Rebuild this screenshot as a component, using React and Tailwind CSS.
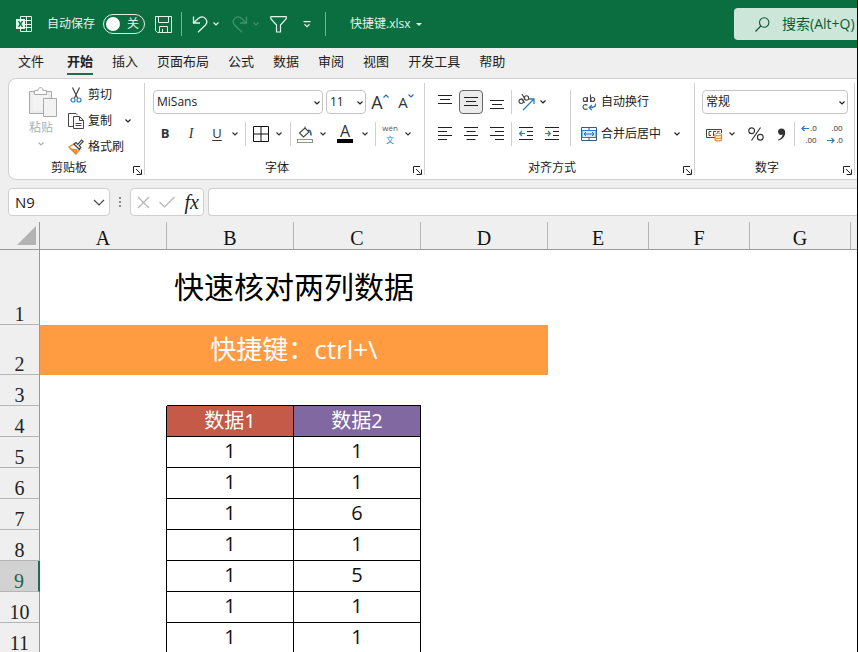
import React, { useState } from 'react';

const tabs = ['文件', '开始', '插入', '页面布局', '公式', '数据', '审阅', '视图', '开发工具', '帮助'];

const columns = ['A', 'B', 'C', 'D', 'E', 'F', 'G'];

const rows = [
    { id: 5, left: 1, right: 1 },
    { id: 6, left: 1, right: 1 },
    { id: 7, left: 1, right: 6 },
    { id: 8, left: 1, right: 1 },
    { id: 9, left: 1, right: 5 },
    { id: 10, left: 1, right: 1 },
    { id: 11, left: 1, right: 1 }
];

const Chevron = ({ className = '' }) => (
    <svg viewBox="0 0 6 4" className={`w-1.5 h-1 shrink-0 ${className}`} fill="none" stroke="currentColor" strokeWidth="1.2">
        <path d="M0.5 0.5 3 3 5.5 0.5" />
    </svg>
);

const IconButton = ({ label, className = '', children }) => (
    <button type="button" aria-label={label} className={`h-6 shrink-0 flex items-center justify-center ${className}`}>
        {children}
    </button>
);

const Divider = ({ className = '' }) => <div className={`w-px h-6 shrink-0 bg-[#d0d0d0] ${className}`} />;

const Select = ({ label, value, className = '' }) => (
    <div className={`relative h-6 ${className}`}>
        <select aria-label={label} className="appearance-none w-full h-full pl-[3px] pr-4 bg-white border border-[#c4c4c4] rounded text-xs text-[#222]">
            <option>{value}</option>
        </select>
        <Chevron className="absolute right-[3px] top-[11px] pointer-events-none" />
    </div>
);

const Group = ({ title, className = '', children }) => (
    <section aria-label={title} className={`flex shrink-0 py-1 ${className}`}>
        <div className="flex-1 flex flex-col">
            <div className="flex-1">{children}</div>
            <div className="flex items-center h-3.5 pr-[2px]">
                <span className="flex-1 text-center pr-1">{title}</span>
                <button type="button" aria-label={`${title}设置`} className="self-end">
                    <svg viewBox="0 0 9 9" className="w-[9px] h-[9px]" fill="none" stroke="#222" strokeWidth="1">
                        <path d="M0.5 7V0.5H7M3 3l4.5 4.5M8.5 3.5v5h-5" />
                    </svg>
                </button>
            </div>
        </div>
        <div className="w-px bg-[#d2d2d2]" />
    </section>
);

const Lines = ({ d }) => (
    <svg viewBox="0 0 14 14" className="w-3.5 h-3.5" fill="none" stroke="#222" strokeWidth="1">
        <path d={d} />
    </svg>
);

const TitleBar = () => {
    const [autoSave, setAutoSave] = useState(false);

    return (
        <header className="flex items-center h-12 shrink-0 pl-4 bg-[#0b6e40] text-[#e2f5ea] text-xs">
            <svg viewBox="0 0 17 17" className="w-[17px] h-[17px] shrink-0" fill="none" stroke="currentColor">
                <path d="M4.5 3.5v-3h11v15h-11v-3M10.5 0.5v15M8 4.5h7.5M9 8.5h6.5M8 11.5h7.5" />
                <rect x="0" y="3" width="9" height="10" fill="currentColor" stroke="none" />
                <path d="M2.5 5.2l4 5.6M6.5 5.2l-4 5.6" stroke="#0b6e40" strokeWidth="1.4" />
            </svg>
            <label htmlFor="autosave" className="ml-3.5 shrink-0">自动保存</label>
            <span className="relative ml-2 w-[42px] h-5 shrink-0">
                <input
                    id="autosave"
                    type="checkbox"
                    role="switch"
                    checked={autoSave}
                    onChange={(e) => setAutoSave(e.target.checked)}
                    className="appearance-none block w-full h-full border border-[#d9f2e4] rounded-full"
                />
                <span className="absolute left-[3px] top-[3px] w-3.5 h-3.5 bg-white rounded-full pointer-events-none" />
                <span className="absolute right-1.5 top-0.5 leading-4 pointer-events-none">{autoSave ? '开' : '关'}</span>
            </span>
            <IconButton label="保存" className="ml-[9px] w-[18px]">
                <svg viewBox="0 0 17 17" className="w-[17px] h-[17px]" fill="none" stroke="currentColor">
                    <path d="M0.5 0.5h16v16h-14l-2-2zM3.5 0.5v6h10v-6M4.5 16.5v-6h8v6M7.5 13v3.5" />
                </svg>
            </IconButton>
            <div className="w-px h-6 shrink-0 ml-[9px] bg-[#6fb792]" />
            <IconButton label="撤消" className="ml-2.5 w-4">
                <svg viewBox="0 0 16 17" className="w-4 h-[17px]" fill="none" stroke="currentColor" strokeWidth="1.3">
                    <path d="M1.5 0.5v6.5h6.5M1.5 7L6 2.7C8.5 0.4 11.5 0.5 13.3 2.4c1.9 2 1.8 4.8-.1 6.8L6 16.3" />
                </svg>
            </IconButton>
            <IconButton label="撤消列表" className="w-4"><Chevron /></IconButton>
            <IconButton label="恢复" className="ml-2 w-4 text-[#3f9468]">
                <svg viewBox="0 0 16 17" className="w-4 h-[17px]" fill="none" stroke="currentColor" strokeWidth="1.3">
                    <path d="M14.5 0.5v6.5H8M14.5 7L10 2.7C7.5 0.4 4.5 0.5 2.7 2.4c-1.9 2-1.8 4.8.1 6.8L10 16.3" />
                </svg>
            </IconButton>
            <IconButton label="恢复列表" className="w-4 text-[#3f9468]"><Chevron /></IconButton>
            <IconButton label="筛选" className="ml-1.5 w-[17px]">
                <svg viewBox="0 0 17 17" className="w-[17px] h-[17px]" fill="none" stroke="currentColor" strokeWidth="1.2">
                    <path d="M0.8 0.7h15.4v2L10.5 9v7h-4V9L0.8 2.7z" />
                </svg>
            </IconButton>
            <IconButton label="自定义快速访问工具栏" className="ml-3 w-4">
                <svg viewBox="0 0 8 7" className="w-2 h-[7px]" fill="none" stroke="currentColor" strokeWidth="1.2">
                    <path d="M0.5 0.6h7M1.5 3.2L4 5.6l2.5-2.4" />
                </svg>
            </IconButton>
            <div className="w-px h-6 shrink-0 ml-2.5 bg-[#6fb792]" />
            <button type="button" className="ml-6 flex shrink-0 items-center gap-1.5">
                快捷键.xlsx
                <svg viewBox="0 0 6 3" className="w-1.5 h-[3px]" fill="currentColor"><path d="M0 0h6L3 3z" /></svg>
            </button>
            <div className="ml-auto w-[123px] h-8 shrink-0 flex items-center pl-[21px] bg-[#cde6da] text-[#0b5a35] rounded-l">
                <svg viewBox="0 0 15 15" className="w-[15px] h-[15px] shrink-0" fill="none" stroke="currentColor" strokeWidth="1.1">
                    <circle cx="9.2" cy="5.5" r="4.7" />
                    <path d="M5.8 9L0.5 14.5" />
                </svg>
                <input
                    type="text"
                    aria-label="搜索"
                    placeholder="搜索(Alt+Q)"
                    className="ml-3 min-w-0 flex-1 bg-transparent text-sm placeholder:text-[#0b5a35] outline-none"
                />
            </div>
        </header>
    );
};

const Clipboard = () => (
    <Group title="剪贴板" className="w-[136px]">
        <div className="flex pl-5">
            <button type="button" disabled className="flex flex-col items-center w-7 text-[#b0b0b0]">
                <svg viewBox="0 0 28 31" className="w-7 h-[31px] mt-1" fill="#ececec" stroke="#a9a9a9">
                    <path d="M0.5 4.5h22v22h-22z" />
                    <path d="M3.5 7.5h16v16h-16z" fill="#f3f3f3" stroke="none" />
                    <path d="M5.5 7.5v-4h3.500c0-4 5-4 5 0h3.500v4z" fill="#fff" />
                    <path d="M14.5 11.5h13v18h-13z" fill="#f3f3f3" />
                </svg>
                <span className="mt-0.5 mr-1 leading-4">粘贴</span>
                <Chevron className="mt-1.5 mr-1" />
            </button>
            <div className="flex flex-col ml-[11px]">
                <button type="button" className="flex items-center gap-1 h-[22px] mt-px">
                    <svg viewBox="0 0 16 16" className="w-4 h-4" fill="none" stroke="#444" strokeWidth="1.2">
                        <path d="M4.500 0.500l5 10.500M11.500 0.500L6.500 11" />
                        <circle cx="5" cy="13" r="2" stroke="#2f7fc4" />
                        <circle cx="11" cy="13" r="2" stroke="#2f7fc4" />
                    </svg>
                    剪切
                </button>
                <div className="flex items-center h-[30px]">
                    <button type="button" className="flex items-center gap-1">
                        <svg viewBox="0 0 16 16" className="w-4 h-4" fill="none" stroke="#444">
                            <path d="M5 13.5H0.5v-13H8l1.500 1.500" />
                            <path d="M5.5 3.5h6l4 4v8h-10zM11.5 3.5v4h4M7.5 10.5h6M7.5 12.5h6" fill="#fff" />
                        </svg>
                        复制
                    </button>
                    <IconButton label="复制选项" className="ml-2 w-4"><Chevron /></IconButton>
                </div>
                <button type="button" className="flex items-center gap-1 h-[22px]">
                    <svg viewBox="0 0 16 16" className="w-4 h-4" fill="none" stroke="#444" strokeWidth="1.2">
                        <path d="M1 8l5-3 5.500 5.500L8 15z" fill="#fff" stroke="#e0832a" />
                        <path d="M3 10l6 1-1.500 3.500z" fill="#f0a040" stroke="#e0832a" />
                        <path d="M6 5l2-1.500 1.800 1.800L13.5 1l1.700 1.500-4 4.200 1.600 1.600L11.5 10.5z" fill="#fff" />
                    </svg>
                    格式刷
                </button>
            </div>
        </div>
    </Group>
);

const FontGroup = () => (
    <Group title="字体" className="w-[280px]">
        <div className="flex flex-col gap-2 pl-2 pt-[7px]">
            <div className="flex items-center">
                <Select label="字体" value="MiSans" className="w-[170px]" />
                <Select label="字号" value="11" className="ml-[3px] w-10" />
                <IconButton label="增大字号" className="ml-0.5 w-6 text-[#333]">
                    <span className="text-lg leading-6">A</span>
                    <svg viewBox="0 0 6 4" className="w-1.5 h-1 mb-3" fill="none" stroke="#2b6cb0" strokeWidth="1.2"><path d="M0.5 3.5L3 1l2.500 2.500" /></svg>
                </IconButton>
                <IconButton label="减小字号" className="ml-0.5 w-6 text-[#333]">
                    <span className="text-[15px] leading-6">A</span>
                    <svg viewBox="0 0 6 4" className="w-1.5 h-1 mb-3" fill="none" stroke="#2b6cb0" strokeWidth="1.2"><path d="M0.5 0.5L3 3l2.500-2.500" /></svg>
                </IconButton>
            </div>
            <div className="flex items-center text-[13px] text-[#333]">
                <IconButton label="加粗" className="w-6 font-bold">B</IconButton>
                <IconButton label="倾斜" className="w-7 italic font-['Liberation_Serif',serif] text-sm">I</IconButton>
                <IconButton label="下划线" className="w-6 underline underline-offset-2">U</IconButton>
                <IconButton label="下划线选项" className="w-3"><Chevron /></IconButton>
                <Divider className="mx-1" />
                <IconButton label="边框" className="w-[22px]">
                    <svg viewBox="0 0 16 16" className="w-4 h-4" fill="none" stroke="#111" strokeWidth="1">
                        <path d="M0.5 0.5h15v15h-15zM8 0.5v15M0.5 8h15" />
                    </svg>
                </IconButton>
                <IconButton label="边框选项" className="w-3.5"><Chevron /></IconButton>
                <Divider className="mx-1" />
                <IconButton label="填充颜色" className="w-5">
                    <svg viewBox="0 0 16 17" className="w-4 h-[17px]" fill="none" stroke="#444" strokeWidth="1.1">
                        <path d="M2.5 7L8 2l4 4-5.500 5z M8 2V0.5" />
                        <path d="M11 4.500c2.500-.5 3 1.500 3 5" stroke="#2b5f9e" strokeWidth="1.6" />
                        <path d="M0.5 13.5h15v3h-15z" stroke="#8a9a8a" fill="#fff" />
                    </svg>
                </IconButton>
                <IconButton label="填充颜色选项" className="w-4"><Chevron /></IconButton>
                <IconButton label="字体颜色" className="w-7 flex-col">
                    <span className="text-base leading-[13px]">A</span>
                    <span className="w-4 h-1 mt-px bg-black" />
                </IconButton>
                <IconButton label="字体颜色选项" className="w-3"><Chevron /></IconButton>
                <Divider className="mx-1" />
                <IconButton label="拼音指南" className="w-5 flex-col text-[8px]">
                    <span className="leading-3 text-[#555]">wén</span>
                    <span className="leading-3 text-[#2f86c9]">文</span>
                </IconButton>
                <IconButton label="拼音选项" className="w-4"><Chevron /></IconButton>
            </div>
        </div>
    </Group>
);

const AlignGroup = () => (
    <Group title="对齐方式" className="w-[270px]">
        <div className="flex pl-[7px] pt-[7px]">
            <div className="flex flex-col gap-2">
                <div className="flex items-center">
                    <IconButton label="顶端对齐" className="w-[26px]"><Lines d="M0 0.5h14M2 4.5h10M0 8.5h14" /></IconButton>
                    <IconButton label="垂直居中" className="w-6 mx-px bg-[#ebebeb] border border-[#666] rounded"><Lines d="M0 2.5h14M2 6.5h10M0 10.5h14" /></IconButton>
                    <IconButton label="底端对齐" className="w-[26px]"><Lines d="M0 5.5h14M2 9.5h10M0 13.5h14" /></IconButton>
                    <Divider className="mx-px" />
                    <IconButton label="方向" className="w-[26px]">
                        <svg viewBox="0 0 17 17" className="w-[17px] h-[17px]" fill="none" stroke="#444" strokeWidth="1.1">
                            <circle cx="3.2" cy="7.3" r="2.2" />
                            <path d="M3.5 4.5L6.800 9" />
                            <circle cx="8.500" cy="4" r="2.2" />
                            <path d="M4 0L7.500 6" />
                            <path d="M5 16L15.5 5.5M11 5h5v5" stroke="#2b7cc4" strokeWidth="1.3" />
                        </svg>
                    </IconButton>
                    <IconButton label="方向选项" className="w-2"><Chevron /></IconButton>
                </div>
                <div className="flex items-center">
                    <IconButton label="左对齐" className="w-[26px]"><Lines d="M0 0.5h14M0 4.5h9M0 8.5h14M0 12.5h9" /></IconButton>
                    <IconButton label="居中" className="w-[26px]"><Lines d="M0 0.5h14M2.5 4.5h9M0 8.5h14M2.5 12.5h9" /></IconButton>
                    <IconButton label="右对齐" className="w-[26px]"><Lines d="M0 0.5h14M5 4.5h9M0 8.5h14M5 12.5h9" /></IconButton>
                    <Divider className="mx-px" />
                    <IconButton label="减少缩进量" className="w-[26px]">
                        <svg viewBox="0 0 14 14" className="w-3.5 h-3.5" fill="none" stroke="#222">
                            <path d="M0 0.5h14M8 4.5h6M8 8.5h6M0 12.5h14" />
                            <path d="M0.8 6.5H6M3 4L0.7 6.5 3 9" stroke="#2b7cc4" strokeWidth="1.2" />
                        </svg>
                    </IconButton>
                    <IconButton label="增加缩进量" className="w-[26px]">
                        <svg viewBox="0 0 14 14" className="w-3.5 h-3.5" fill="none" stroke="#222">
                            <path d="M0 0.5h14M8 4.5h6M8 8.5h6M0 12.5h14" />
                            <path d="M0 6.5h5.200M3 4l2.300 2.500L3 9" stroke="#2b7cc4" strokeWidth="1.2" />
                        </svg>
                    </IconButton>
                </div>
            </div>
            <div className="ml-[5px] w-px bg-[#d2d2d2]" />
            <div className="flex flex-col gap-2 ml-2.5">
                <button type="button" className="flex items-center gap-1 h-6">
                    <svg viewBox="0 0 16 17" className="w-4 h-[17px]" fill="none" stroke="#444" strokeWidth="1.1">
                        <circle cx="4.2" cy="5.500" r="2" />
                        <path d="M6.4 3v5M9.5 0.500v7.500" />
                        <circle cx="11.7" cy="5.500" r="2" />
                        <path d="M6.500 11.200c-3-1.500-4.500 0-4.500 1.800s2 3.200 4.500 1.700" />
                        <path d="M14.500 9.500c.5 3-1 4-6 4M10.800 11L8.200 13.500l2.600 2.500" stroke="#2b7cc4" strokeWidth="1.3" />
                    </svg>
                    自动换行
                </button>
                <div className="flex items-center">
                    <button type="button" className="flex items-center gap-1 h-6">
                        <svg viewBox="0 0 16 16" className="w-4 h-4" fill="none" stroke="#3c5a70">
                            <path d="M0.5 1.5h15v13h-15z" fill="#fff" />
                            <path d="M1 4.5h14v7H1z" fill="#d4ecf8" stroke="#2b7cc4" />
                            <path d="M8 1.5v3M8 11.5v3" />
                            <path d="M3 8h10M5 6L3 8l2 2M11 6l2 2-2 2" stroke="#1b6cb4" />
                        </svg>
                        合并后居中
                    </button>
                    <IconButton label="合并选项" className="ml-2 w-4"><Chevron /></IconButton>
                </div>
            </div>
        </div>
    </Group>
);

const NumberGroup = () => (
    <Group title="数字" className="w-[160px]">
        <div className="flex flex-col gap-2 pl-[7px] pr-1.5 pt-[7px]">
            <Select label="数字格式" value="常规" className="w-full" />
            <div className="flex items-center text-[#333]">
                <IconButton label="会计数字格式" className="w-6">
                    <svg viewBox="0 0 17 15" className="w-[17px] h-[15px]" fill="none" stroke="#444">
                        <path d="M9 10.5H0.5v-8h15V6" />
                        <path d="M5.5 4.500H3v4h2M7.5 9V4.500h2.500M11.5 5.500v-1h2" />
                        <path d="M9 7.500v5c0 2 6.500 2 6.500 0v-5z" fill="#fff3e0" stroke="#e0832a" strokeWidth="1.2" />
                        <ellipse cx="12.2" cy="7.5" rx="3.2" ry="1.3" fill="#fff" stroke="#e0832a" />
                        <path d="M9 10c0 2 6.500 2 6.500 0" stroke="#e0832a" />
                    </svg>
                </IconButton>
                <IconButton label="会计格式选项" className="w-3"><Chevron /></IconButton>
                <IconButton label="百分比样式" className="ml-1.5 w-6">
                    <svg viewBox="0 0 16 14" className="w-4 h-3.5" fill="none" stroke="currentColor" strokeWidth="1.2">
                        <circle cx="3.7" cy="3.7" r="2.9" />
                        <circle cx="12.3" cy="10.3" r="2.9" />
                        <path d="M12.5 0.5L3.5 13.5" />
                    </svg>
                </IconButton>
                <IconButton label="千位分隔样式" className="w-[26px]">
                    <svg viewBox="0 0 9 13" className="w-[9px] h-[13px]" fill="currentColor">
                        <path d="M4.5 0.5C2.2 0.5 1 2 1 3.8S2.3 7 4 7c.7 0 1.200-.2 1.600-.5C5.3 9 3.5 10.7 1 11.7l.5.9C5.5 11.5 8.2 8.5 8.2 4.6 8.2 2 6.8 0.5 4.5 0.5z" />
                    </svg>
                </IconButton>
                <Divider />
                <IconButton label="增加小数位数" className="ml-0.5 w-6 flex-col text-[8px] leading-3">
                    <span className="flex items-center gap-px">
                        <svg viewBox="0 0 8 7" className="w-2 h-[7px]" fill="none" stroke="#2b7cc4" strokeWidth="1.2"><path d="M1 3.5h7M3.5 1L1 3.5 3.5 6" /></svg>
                        .0
                    </span>
                    <span className="pl-1">.00</span>
                </IconButton>
                <IconButton label="减少小数位数" className="ml-0.5 w-6 flex-col text-[8px] leading-3">
                    <span className="pl-1">.00</span>
                    <span className="flex items-center gap-px">
                        <svg viewBox="0 0 8 7" className="w-2 h-[7px]" fill="none" stroke="#2b7cc4" strokeWidth="1.2"><path d="M0 3.5h7M4.5 1L7 3.5 4.5 6" /></svg>
                        .0
                    </span>
                </IconButton>
            </div>
        </div>
    </Group>
);

const FormulaBar = () => (
    <div className="flex items-center h-7 shrink-0 mt-2 pl-2 text-[#222]">
        <div className="flex items-center w-[102px] h-7 shrink-0 bg-white border border-[#cfcfcf] rounded">
            <input type="text" aria-label="名称框" defaultValue="N9" className="min-w-0 flex-1 pl-1.5 text-[15px] outline-none" />
            <button type="button" aria-label="名称列表" className="px-1">
                <svg viewBox="0 0 12 7" className="w-3 h-[7px]" fill="none" stroke="#444" strokeWidth="1.2"><path d="M1 1l5 5 5-5" /></svg>
            </button>
        </div>
        <svg viewBox="0 0 2 10" className="w-0.5 h-2.5 mx-[9px] shrink-0" fill="#888">
            <path d="M0 0h2v2H0zM0 4h2v2H0zM0 8h2v2H0z" />
        </svg>
        <div className="flex items-center justify-between w-[74px] h-7 shrink-0 pl-1.5 pr-1 bg-white border border-[#cfcfcf] rounded">
            <button type="button" aria-label="取消">
                <svg viewBox="0 0 13 13" className="w-[13px] h-[13px]" fill="none" stroke="#b5b5b5" strokeWidth="1.2"><path d="M1 1l11 11M12 1L1 12" /></svg>
            </button>
            <button type="button" aria-label="输入">
                <svg viewBox="0 0 16 12" className="w-4 h-3" fill="none" stroke="#b5b5b5" strokeWidth="1.2"><path d="M0.5 6L5.5 11 15.5 1" /></svg>
            </button>
            <button type="button" aria-label="插入函数" className="font-['Liberation_Serif',serif] italic text-xl leading-5">fx</button>
        </div>
        <input type="text" aria-label="编辑栏" className="ml-1 h-7 min-w-0 flex-1 px-2 bg-white border border-r-0 border-[#cfcfcf] rounded-l outline-none" />
    </div>
);

const RowHeader = ({ id, selected = false }) => (
    <th
        scope="row"
        className={selected
            ? "align-bottom p-0 font-normal leading-5 font-['Liberation_Serif',serif] border-b border-b-[#b5b5b5] border-r-2 border-r-[#1e6e4b] bg-[#d2d2d2] text-[#1e6650]"
            : "align-bottom p-0 font-normal leading-5 font-['Liberation_Serif',serif] border-b border-r border-b-[#b5b5b5] border-r-[#999] bg-[#efefef] text-[#222]"}
    >
        {id}
    </th>
);

const Sheet = () => (
    <main className="flex-1 min-h-0 mt-1.5 overflow-hidden bg-white">
        <table className="w-full table-fixed border-separate border-spacing-0 text-xl text-center text-[#111]">
            <colgroup>
                <col className="w-10" />
                <col className="w-[127px]" />
                <col className="w-[127px]" />
                <col className="w-[127px]" />
                <col className="w-[127px]" />
                <col className="w-[101px]" />
                <col className="w-[101px]" />
                <col className="w-[101px]" />
                <col />
            </colgroup>
            <thead>
                <tr className="h-7 bg-[#efefef] font-['Liberation_Serif',serif]">
                    <td className="p-0 border-b border-r border-[#999]">
                        <button type="button" aria-label="全选" className="block ml-auto mr-[3px]">
                            <svg viewBox="0 0 19 19" className="w-[19px] h-[19px]" fill="#b3b3b3"><path d="M19 0v19H0z" /></svg>
                        </button>
                    </td>
                    {columns.map((name) => (
                        <th key={name} scope="col" className="p-0 pb-px align-bottom font-normal leading-5 border-b border-r border-b-[#999] border-r-[#b5b5b5]">
                            {name}
                        </th>
                    ))}
                    <td className="p-0 border-b border-[#999]" />
                </tr>
            </thead>
            <tbody>
                <tr className="h-[75px]">
                    <RowHeader id={1} />
                    <td colSpan={4} className="p-0 pb-0.5 text-[30px] leading-10 text-black">快速核对两列数据</td>
                    <td colSpan={4} />
                </tr>
                <tr className="h-[50px]">
                    <RowHeader id={2} />
                    <td colSpan={4} className="p-0 pb-0.5 bg-[#ff9b41] text-[26px] leading-8 text-white">快捷键：ctrl+\</td>
                    <td colSpan={4} />
                </tr>
                <tr className="h-[31px]">
                    <RowHeader id={3} />
                    <td />
                    <td className="border-b border-black" />
                    <td className="border-b border-black" />
                    <td colSpan={5} />
                </tr>
                <tr className="h-[31px]">
                    <RowHeader id={4} />
                    <td className="border-r border-black" />
                    <td className="p-0 leading-7 bg-[#c55a48] text-white border-r border-b border-black">数据1</td>
                    <td className="p-0 leading-7 bg-[#8268a0] text-white border-r border-b border-black">数据2</td>
                    <td colSpan={5} />
                </tr>
                {rows.map((row) => (
                    <tr key={row.id} className="h-[31px]">
                        <RowHeader id={row.id} selected={row.id === 9} />
                        <td className="border-r border-black" />
                        <td className="p-0 align-top leading-7 border-r border-b border-black">{row.left}</td>
                        <td className="p-0 align-top leading-7 border-r border-b border-black">{row.right}</td>
                        <td colSpan={5} />
                    </tr>
                ))}
            </tbody>
        </table>
    </main>
);

const App = () => {
    const [active, setActive] = useState('开始');

    return (
        <div className="flex flex-col h-screen overflow-hidden bg-[#efefef] border-r border-black text-xs text-[#222] font-['Open_Sans','Noto_Sans_CJK_SC',sans-serif]">
            <TitleBar />
            <nav role="tablist" className="flex shrink-0 h-[30px] gap-[19px] pl-[18px] text-[13px]">
                {tabs.map((tab) => (
                    <button
                        key={tab}
                        type="button"
                        role="tab"
                        aria-selected={tab === active}
                        onClick={() => setActive(tab)}
                        className={`shrink-0 h-[27px] pt-0.5 border-b-2 first:mr-1 ${tab === active ? 'font-bold border-[#1e6e4b]' : 'border-transparent'}`}
                    >
                        {tab}
                    </button>
                ))}
            </nav>
            <div className="flex shrink-0 ml-2 h-[102px] overflow-hidden bg-white border border-r-0 border-[#d2d2d2] rounded-l-lg">
                <Clipboard />
                <FontGroup />
                <AlignGroup />
                <NumberGroup />
            </div>
            <FormulaBar />
            <Sheet />
        </div>
    );
};

export default App;
